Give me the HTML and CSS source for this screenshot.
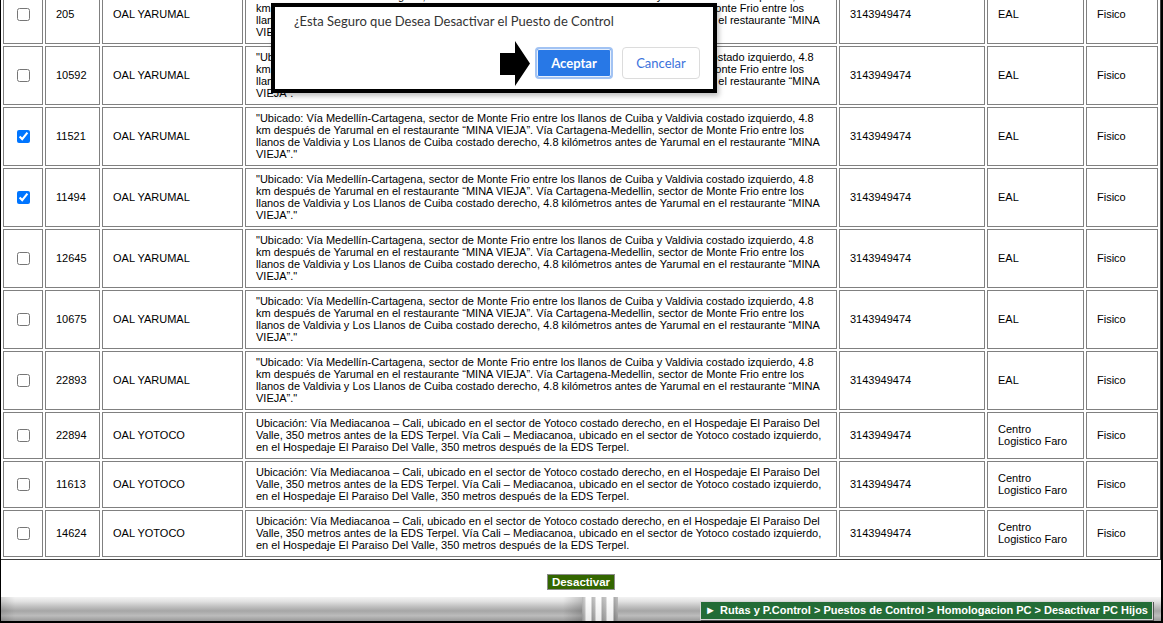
FILE: index.html
```html
<!DOCTYPE html>
<html lang="es">
<head>
<meta charset="utf-8">
<title>Desactivar PC Hijos</title>
<link rel="stylesheet" href="styles.css">
</head>
<body>
<div class="frame">
  <div class="content">
    <table class="grid">
      <tbody>
        <tr>
          <td class="chk"><input type="checkbox"></td>
          <td class="id">205</td>
          <td class="name">OAL YARUMAL</td>
          <td class="desc">"Ubicado: Vía Medellín-Cartagena, sector de Monte Frio entre los llanos de Cuiba y Valdivia costado izquierdo, 4.8 km después de Yarumal en el restaurante “MINA VIEJA”. Vía Cartagena-Medellin, sector de Monte Frio entre los llanos de Valdivia y Los Llanos de Cuiba costado derecho, 4.8 kilómetros antes de Yarumal en el restaurante “MINA VIEJA”."</td>
          <td class="tel">3143949474</td>
          <td class="emp">EAL</td>
          <td class="tipo">Fisico</td>
        </tr>
        <tr>
          <td class="chk"><input type="checkbox"></td>
          <td class="id">10592</td>
          <td class="name">OAL YARUMAL</td>
          <td class="desc">"Ubicado: Vía Medellín-Cartagena, sector de Monte Frio entre los llanos de Cuiba y Valdivia costado izquierdo, 4.8 km después de Yarumal en el restaurante “MINA VIEJA”. Vía Cartagena-Medellin, sector de Monte Frio entre los llanos de Valdivia y Los Llanos de Cuiba costado derecho, 4.8 kilómetros antes de Yarumal en el restaurante “MINA VIEJA”."</td>
          <td class="tel">3143949474</td>
          <td class="emp">EAL</td>
          <td class="tipo">Fisico</td>
        </tr>
        <tr>
          <td class="chk"><input type="checkbox" checked></td>
          <td class="id">11521</td>
          <td class="name">OAL YARUMAL</td>
          <td class="desc">"Ubicado: Vía Medellín-Cartagena, sector de Monte Frio entre los llanos de Cuiba y Valdivia costado izquierdo, 4.8 km después de Yarumal en el restaurante “MINA VIEJA”. Vía Cartagena-Medellin, sector de Monte Frio entre los llanos de Valdivia y Los Llanos de Cuiba costado derecho, 4.8 kilómetros antes de Yarumal en el restaurante “MINA VIEJA”."</td>
          <td class="tel">3143949474</td>
          <td class="emp">EAL</td>
          <td class="tipo">Fisico</td>
        </tr>
        <tr>
          <td class="chk"><input type="checkbox" checked></td>
          <td class="id">11494</td>
          <td class="name">OAL YARUMAL</td>
          <td class="desc">"Ubicado: Vía Medellín-Cartagena, sector de Monte Frio entre los llanos de Cuiba y Valdivia costado izquierdo, 4.8 km después de Yarumal en el restaurante “MINA VIEJA”. Vía Cartagena-Medellin, sector de Monte Frio entre los llanos de Valdivia y Los Llanos de Cuiba costado derecho, 4.8 kilómetros antes de Yarumal en el restaurante “MINA VIEJA”."</td>
          <td class="tel">3143949474</td>
          <td class="emp">EAL</td>
          <td class="tipo">Fisico</td>
        </tr>
        <tr>
          <td class="chk"><input type="checkbox"></td>
          <td class="id">12645</td>
          <td class="name">OAL YARUMAL</td>
          <td class="desc">"Ubicado: Vía Medellín-Cartagena, sector de Monte Frio entre los llanos de Cuiba y Valdivia costado izquierdo, 4.8 km después de Yarumal en el restaurante “MINA VIEJA”. Vía Cartagena-Medellin, sector de Monte Frio entre los llanos de Valdivia y Los Llanos de Cuiba costado derecho, 4.8 kilómetros antes de Yarumal en el restaurante “MINA VIEJA”."</td>
          <td class="tel">3143949474</td>
          <td class="emp">EAL</td>
          <td class="tipo">Fisico</td>
        </tr>
        <tr>
          <td class="chk"><input type="checkbox"></td>
          <td class="id">10675</td>
          <td class="name">OAL YARUMAL</td>
          <td class="desc">"Ubicado: Vía Medellín-Cartagena, sector de Monte Frio entre los llanos de Cuiba y Valdivia costado izquierdo, 4.8 km después de Yarumal en el restaurante “MINA VIEJA”. Vía Cartagena-Medellin, sector de Monte Frio entre los llanos de Valdivia y Los Llanos de Cuiba costado derecho, 4.8 kilómetros antes de Yarumal en el restaurante “MINA VIEJA”."</td>
          <td class="tel">3143949474</td>
          <td class="emp">EAL</td>
          <td class="tipo">Fisico</td>
        </tr>
        <tr>
          <td class="chk"><input type="checkbox"></td>
          <td class="id">22893</td>
          <td class="name">OAL YARUMAL</td>
          <td class="desc">"Ubicado: Vía Medellín-Cartagena, sector de Monte Frio entre los llanos de Cuiba y Valdivia costado izquierdo, 4.8 km después de Yarumal en el restaurante “MINA VIEJA”. Vía Cartagena-Medellin, sector de Monte Frio entre los llanos de Valdivia y Los Llanos de Cuiba costado derecho, 4.8 kilómetros antes de Yarumal en el restaurante “MINA VIEJA”."</td>
          <td class="tel">3143949474</td>
          <td class="emp">EAL</td>
          <td class="tipo">Fisico</td>
        </tr>
        <tr>
          <td class="chk"><input type="checkbox"></td>
          <td class="id">22894</td>
          <td class="name">OAL YOTOCO</td>
          <td class="desc">Ubicación: Vía Mediacanoa – Cali, ubicado en el sector de Yotoco costado derecho, en el Hospedaje El Paraiso Del Valle, 350 metros antes de la EDS Terpel. Vía Cali – Mediacanoa, ubicado en el sector de Yotoco costado izquierdo, en el Hospedaje El Paraiso Del Valle, 350 metros después de la EDS Terpel.</td>
          <td class="tel">3143949474</td>
          <td class="emp">Centro Logistico Faro</td>
          <td class="tipo">Fisico</td>
        </tr>
        <tr>
          <td class="chk"><input type="checkbox"></td>
          <td class="id">11613</td>
          <td class="name">OAL YOTOCO</td>
          <td class="desc">Ubicación: Vía Mediacanoa – Cali, ubicado en el sector de Yotoco costado derecho, en el Hospedaje El Paraiso Del Valle, 350 metros antes de la EDS Terpel. Vía Cali – Mediacanoa, ubicado en el sector de Yotoco costado izquierdo, en el Hospedaje El Paraiso Del Valle, 350 metros después de la EDS Terpel.</td>
          <td class="tel">3143949474</td>
          <td class="emp">Centro Logistico Faro</td>
          <td class="tipo">Fisico</td>
        </tr>
        <tr>
          <td class="chk"><input type="checkbox"></td>
          <td class="id">14624</td>
          <td class="name">OAL YOTOCO</td>
          <td class="desc">Ubicación: Vía Mediacanoa – Cali, ubicado en el sector de Yotoco costado derecho, en el Hospedaje El Paraiso Del Valle, 350 metros antes de la EDS Terpel. Vía Cali – Mediacanoa, ubicado en el sector de Yotoco costado izquierdo, en el Hospedaje El Paraiso Del Valle, 350 metros después de la EDS Terpel.</td>
          <td class="tel">3143949474</td>
          <td class="emp">Centro Logistico Faro</td>
          <td class="tipo">Fisico</td>
        </tr>
      </tbody>
    </table>
    <div class="actions">
      <button type="button" class="btn-desactivar">Desactivar</button>
    </div>
  </div>

  <div class="statusbar">
    <div class="bar-left"></div>
    <div class="grip"></div>
    <div class="bar-right">
      <div class="crumb"><span class="crumb-arrow">►</span> Rutas y P.Control &gt; Puestos de Control &gt; Homologacion PC &gt; Desactivar PC Hijos</div>
    </div>
  </div>

  <div class="dialog">
    <p class="dialog-msg">¿Esta Seguro que Desea Desactivar el Puesto de Control</p>
    <div class="dialog-buttons">
      <button type="button" class="btn-ok">Aceptar</button>
      <button type="button" class="btn-cancel">Cancelar</button>
    </div>
  </div>

  <svg class="pointer" width="31" height="47" viewBox="0 0 31 47" aria-hidden="true">
    <polygon points="0,13 15,13 15,1 30,23.5 15,46 15,35 0,35" fill="#000"/>
  </svg>
</div>
</body>
</html>
```

FILE: styles.css
```css
* {
  box-sizing: border-box;
}

html,
body {
  margin: 0;
  padding: 0;
  background: #fff;
}

body {
  font-family: "Liberation Sans", Arial, sans-serif;
  font-size: 11px;
  color: #000;
}

.frame {
  position: relative;
  width: 1163px;
  height: 623px;
  border-left: 1px solid #000;
  border-right: 2px solid #000;
  border-bottom: 2px solid #000;
  overflow: hidden;
  display: flex;
  flex-direction: column;
}

.content {
  flex: 1;
  overflow: hidden;
  display: flex;
  flex-direction: column;
}

/* ---------- table ---------- */
.grid {
  width: 1160px;
  flex: none;
  table-layout: fixed;
  border-collapse: separate;
  border-spacing: 2px;
  border: 1px solid;
  border-color: #a0a0a0 #404040 #404040 #a0a0a0;
  margin-top: -18px;
  margin-left: -1px;
}

.grid td {
  border: 1px solid #808080;
  padding: 4px 10px 5px;
  vertical-align: middle;
  line-height: 12px;
  text-align: left;
}

.grid td.chk {
  width: 40px;
  padding: 0;
  text-align: center;
}

.grid td.id {
  width: 55px;
}

.grid td.name {
  width: 141px;
}

.grid td.desc {
  width: 592px;
}

.grid td.tel {
  width: 146px;
}

.grid td.emp {
  width: 97px;
}

.grid td.tipo {
  width: 72px;
}

.chk input {
  width: 13px;
  height: 13px;
  margin: 0;
  vertical-align: middle;
}

/* ---------- action ---------- */
.actions {
  display: flex;
  justify-content: center;
  padding-top: 14px;
}

.btn-desactivar {
  font-family: "Liberation Sans", Arial, sans-serif;
  font-weight: bold;
  font-size: 11.5px;
  line-height: 14px;
  height: 16px;
  padding: 0 4px;
  color: #fff;
  background: #336600;
  border: 1px solid #8c8c8c;
  border-radius: 0;
}

/* ---------- status bar ---------- */
.statusbar {
  flex: none;
  height: 24px;
  display: flex;
  background: linear-gradient(to bottom, #f3f3f3 0%, #e2e2e2 18%, #bdbdbd 42%, #a6a6a6 58%, #bcbcbc 78%, #999 100%);
}

.bar-left {
  width: 581px;
  background: linear-gradient(to right, rgba(0, 0, 0, 0.12) 0, rgba(0, 0, 0, 0) 14px, rgba(0, 0, 0, 0) 562px, rgba(0, 0, 0, 0.18) 581px);
}

.grip {
  width: 36px;
  background:
    linear-gradient(to bottom, rgba(255, 255, 255, 0.3), rgba(0, 0, 0, 0.08)),
    linear-gradient(to right, #9a9a9a 0, #bdbdbd 3px, #fff 4px, #fff 9px, #9d9d9d 10px, #b0b0b0 13px, #fff 14px, #fff 19px, #9d9d9d 20px, #b0b0b0 24px, #fff 25px, #fff 31px, #888 32px, #a8a8a8 36px);
}

.bar-right {
  flex: 1;
  display: flex;
  justify-content: flex-end;
  align-items: flex-start;
  padding: 4px 8px 0 0;
}

.crumb {
  height: 19px;
  padding: 0 4px 0 4px;
  background: #236c36;
  border: 1px solid #d8d8d8;
  box-shadow: 1px 1px 0 #555;
  color: #fff;
  font-family: "Liberation Sans", Arial, sans-serif;
  font-weight: bold;
  font-size: 11px;
  line-height: 17px;
  white-space: nowrap;
}

.crumb-arrow {
  font-size: 11px;
  margin-right: 1px;
}

/* ---------- dialog overlay ---------- */
.dialog {
  position: absolute;
  left: 270px;
  top: 3px;
  width: 446px;
  height: 90px;
  background: #fff;
  border: 4px solid #000;
  box-shadow: 2px 3px 5px rgba(0, 0, 0, 0.25);
  padding: 0 13px 0 19px;
  display: flex;
  flex-direction: column;
}

.dialog-msg {
  margin: 4px 0 0;
  font-family: "Segoe UI", Lato, "Open Sans", sans-serif;
  font-size: 13px;
  line-height: 20px;
  color: #333;
}

.dialog-buttons {
  display: flex;
  justify-content: flex-end;
  gap: 9px;
  margin-top: 16px;
}

.btn-ok,
.btn-cancel {
  width: 78px;
  height: 32px;
  border-radius: 4px;
  font-family: "Segoe UI", Lato, "Open Sans", sans-serif;
  font-size: 13px;
  padding: 0;
}

.btn-ok {
  background: #2878e6;
  color: #fff;
  font-weight: bold;
  border: 2px solid #a2c3f3;
  box-shadow: inset 0 0 0 1px #e6effc;
}

.btn-cancel {
  background: #fff;
  color: #3b72dc;
  border: 1px solid #dcdcdc;
}

.pointer {
  position: absolute;
  left: 499px;
  top: 40px;
}
```
